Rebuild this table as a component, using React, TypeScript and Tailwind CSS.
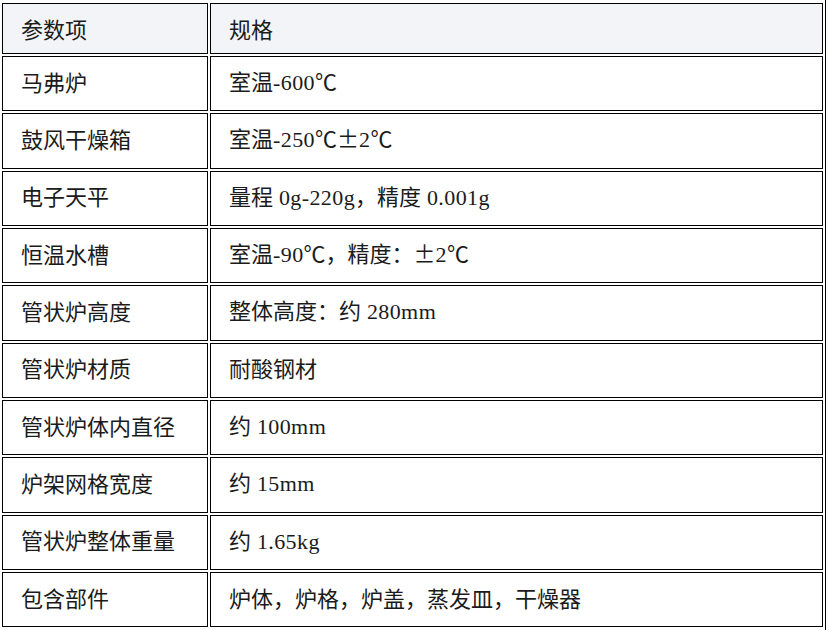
const rows: [string, string][] = [
  ["马弗炉", "室温-600℃"],
  ["鼓风干燥箱", "室温-250℃±2℃"],
  ["电子天平", "量程 0g-220g，精度 0.001g"],
  ["恒温水槽", "室温-90℃，精度：±2℃"],
  ["管状炉高度", "整体高度：约 280mm"],
  ["管状炉材质", "耐酸钢材"],
  ["管状炉体内直径", "约 100mm"],
  ["炉架网格宽度", "约 15mm"],
  ["管状炉整体重量", "约 1.65kg"],
  ["包含部件", "炉体，炉格，炉盖，蒸发皿，干燥器"],
];

// latin runs get the serif face, everything else the CJK face
const splitRuns = (text: string) => text.match(/[\x20-\x7e]+|[^\x20-\x7e]+/g) || [];

const Text: React.FC<{ text: string }> = ({ text }) => (
  <span className="whitespace-pre">
    {splitRuns(text).map((run, i) =>
      /^[\x20-\x7e]+$/.test(run) ? (
        <span key={i} className="font-['Liberation_Serif',serif] tracking-[0.4px]">
          {run.replace(/ /g, "\u2005")}
        </span>
      ) : (
        <span key={i} className="font-['Noto_Sans_CJK_SC',sans-serif]">
          {run}
        </span>
      )
    )}
  </span>
);

const Cell: React.FC<{ text: string; wide?: boolean; head?: boolean }> = ({ text, wide, head }) => (
  <div
    className={`flex items-center border border-black pl-[18px] text-[22px] text-[#1b1b1b] ${
      wide ? "w-[613px]" : "w-[206px]"
    } ${head ? "bg-[#f3f4f8] pt-[1px]" : "bg-white pb-[4px]"}`}
  >
    <Text text={text} />
  </div>
);

const App: React.FC = () => {
  return (
    <div className="h-[630px] w-[826px] border-r border-black bg-white pl-[2px] pt-[3px]">
      <div className="flex flex-col gap-y-[2px]">
        <div className="flex h-[51px] gap-x-[2px]">
          <Cell text="参数项" head />
          <Cell text="规格" wide head />
        </div>
        {rows.map(([name, spec]) => (
          <div key={name} className="flex h-[55.33px] gap-x-[2px]">
            <Cell text={name} />
            <Cell text={spec} wide />
          </div>
        ))}
      </div>
    </div>
  );
};

export default App;
